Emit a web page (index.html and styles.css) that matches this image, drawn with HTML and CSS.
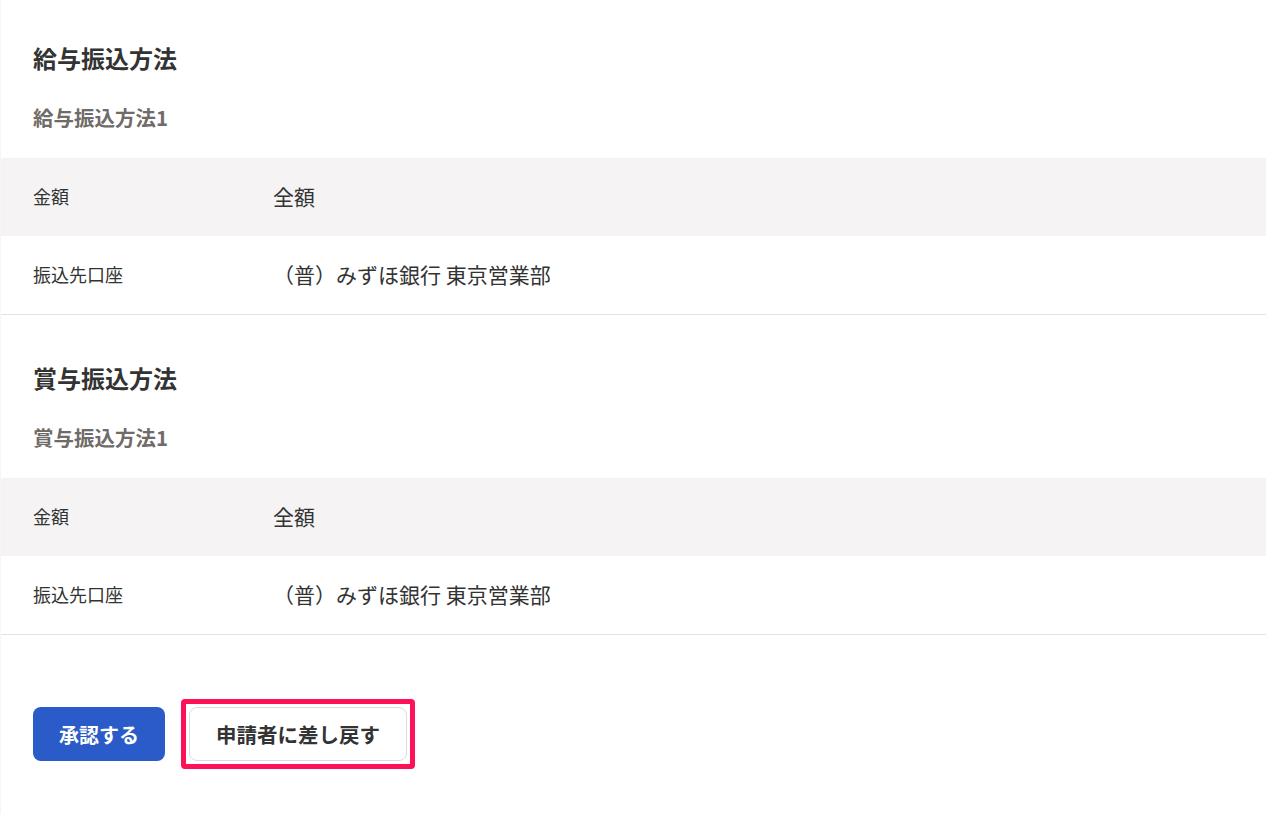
FILE: index.html
```html
<!DOCTYPE html>
<html lang="ja">
<head>
    <meta charset="UTF-8">
    <meta name="viewport" content="width=device-width, initial-scale=1.0">
    <title>振込方法の確認</title>
    <link rel="stylesheet" href="styles.css">
</head>
<body>
    <div class="page">
        <section class="section">
            <h2 class="section-title">給与振込方法</h2>
            <h3 class="sub-title">給与振込方法1</h3>
            <div class="info-table">
                <div class="row row-shaded">
                    <span class="row-label">金額</span>
                    <span class="row-value">全額</span>
                </div>
                <div class="row">
                    <span class="row-label">振込先口座</span>
                    <span class="row-value">（普）みずほ銀行 東京営業部</span>
                </div>
            </div>
        </section>

        <section class="section">
            <h2 class="section-title">賞与振込方法</h2>
            <h3 class="sub-title">賞与振込方法1</h3>
            <div class="info-table">
                <div class="row row-shaded">
                    <span class="row-label">金額</span>
                    <span class="row-value">全額</span>
                </div>
                <div class="row">
                    <span class="row-label">振込先口座</span>
                    <span class="row-value">（普）みずほ銀行 東京営業部</span>
                </div>
            </div>
        </section>

        <div class="actions">
            <button class="btn btn-primary">承認する</button>
            <!-- highlighted button -->
            <span class="highlight">
                <button class="btn btn-secondary">申請者に差し戻す</button>
            </span>
        </div>
    </div>
</body>
</html>
```

FILE: styles.css
```css
body {
    margin: 0;
    font-family: "Noto Sans CJK JP", "Noto Sans", sans-serif;
    color: #333;
    background: #fff;
}

.page {
    border-left: 1px solid #f6f6f6;
    min-height: 814px;
}

.section {
    padding-top: 42px;
    border-bottom: 1px solid #e3e3e3;
}

.section + .section {
    padding-top: 47px;
}

.section-title {
    margin: 0;
    padding-left: 32px;
    font-size: 24px;
    line-height: 32px;
    font-weight: bold;
    color: #333;
}

.sub-title {
    margin: 29px 0 0;
    padding-left: 32px;
    font-size: 20.5px;
    line-height: 28px;
    font-weight: bold;
    color: #6f6b68;
}

.info-table {
    margin-top: 27px;
}

.row {
    box-sizing: border-box;
    display: grid;
    grid-template-columns: 240px 1fr;
    align-items: center;
    height: 78px;
    padding: 0 0 3px 32px;
}

.row-shaded {
    background: #f5f3f3;
}

.row-label {
    font-size: 18px;
    color: #333;
}

.row-value {
    font-size: 21px;
    color: #333;
}

.actions {
    display: flex;
    align-items: center;
    gap: 16px;
    padding: 64px 0 0 32px;
}

.btn {
    height: 54px;
    border-radius: 8px;
    font-family: inherit;
    font-size: 20px;
    font-weight: bold;
    cursor: pointer;
}

.btn-primary {
    width: 132px;
    border: none;
    background: #2a5bc8;
    color: #fff;
}

.btn-secondary {
    display: block;
    width: 218px;
    border: 1px solid #dcdcdc;
    background: #fff;
    color: #333;
    font-size: 20.5px;
}

.highlight {
    display: block;
    padding: 3px;
    border: 5px solid #ff1157;
    border-radius: 4px;
}
```
